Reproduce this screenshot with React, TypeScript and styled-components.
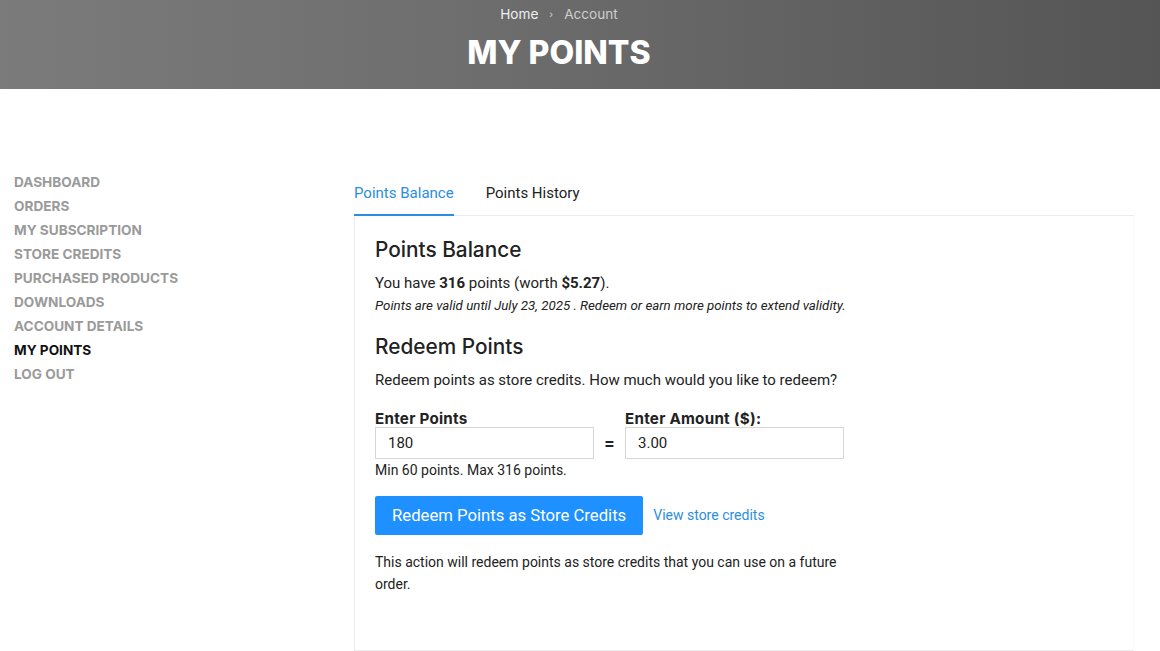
import React from "react";
import styled, { createGlobalStyle } from "styled-components";

const GlobalStyle = createGlobalStyle`
  html, body { margin: 0; padding: 0; background: #fff; }
  body { font-family: Roboto, "Liberation Sans", Arial, sans-serif; color: #222; }
  * { box-sizing: border-box; }
`;

const HEAD = `Inter, "Noto Sans", "Liberation Sans", sans-serif`;

const Page = styled.div`
  width: 1160px;
  min-height: 651px;
  display: flex;
  flex-direction: column;
`;

const Hero = styled.header`
  height: 89px;
  background: linear-gradient(90deg, #7b7b7b 0%, #6e6e6e 40%, #5f5f5f 75%, #555555 100%);
  display: flex;
  flex-direction: column;
  align-items: center;
  padding: 6px 42px 0 0;
`;

const Crumbs = styled.nav`
  display: flex;
  align-items: center;
  gap: 11px;
  font-family: ${HEAD};
  font-size: 13.6px;
  line-height: 16px;
  color: #e6e6e6;
`;

const CrumbSep = styled.span`
  font-size: 10px;
  color: #d0d0d0;
`;

const CrumbItem = styled.span<{ $muted?: boolean }>`
  color: ${(p) => (p.$muted ? "#cfcfcf" : "#f0f0f0")};
`;

const Title = styled.h1`
  margin: 12px 0 0;
  font-family: ${HEAD};
  font-weight: 800;
  font-size: 32px;
  line-height: 38px;
  color: #fff;
`;

const Body = styled.div`
  display: flex;
  padding: 79px 26px 0 14px;
`;

const Sidebar = styled.nav`
  width: 340px;
  display: flex;
  flex-direction: column;
  padding-top: 2px;
`;

const SideLink = styled.a<{ $active?: boolean }>`
  font-family: ${HEAD};
  font-weight: 700;
  font-size: 13.6px;
  line-height: 24px;
  text-transform: uppercase;
  color: ${(p) => (p.$active ? "#111" : "#9a9a9a")};
  text-decoration: none;
`;

const Main = styled.main`
  flex: 1;
  display: flex;
  flex-direction: column;
  padding-top: 15px;
`;

const Tabs = styled.div`
  display: flex;
  gap: 32px;
  border-bottom: 1px solid #ebebeb;
  height: 33px;
`;

const Tab = styled.div<{ $active?: boolean }>`
  font-size: 15px;
  line-height: 18px;
  padding-top: 1px;
  color: ${(p) => (p.$active ? "#2a8de4" : "#222")};
  border-bottom: 2px solid ${(p) => (p.$active ? "#2a8de4" : "transparent")};
  margin-bottom: -1px;
`;

const Panel = styled.section`
  border: 1px solid #ececec;
  border-top: none;
  border-right-color: #fafafa;
  padding: 21px 20px 0;
  height: 435px;
`;

const H2 = styled.h2<{ $top?: number }>`
  margin: ${(p) => p.$top ?? 0}px 0 0;
  font-family: ${HEAD};
  font-weight: 500;
  font-size: 20.8px;
  line-height: 26px;
  color: #222;
`;

const Text = styled.p<{ $top?: number }>`
  margin: ${(p) => p.$top ?? 0}px 0 0;
  font-size: 15px;
  line-height: 20px;
  color: #222;
`;

const Note = styled.p`
  margin: 5px 0 0;
  font-size: 13.3px;
  line-height: 16px;
  font-style: italic;
  color: #222;
`;

const FormRow = styled.div`
  display: flex;
  align-items: flex-start;
  margin-top: 20px;
`;

const Field = styled.div`
  display: flex;
  flex-direction: column;
  width: 219px;
`;

const Label = styled.label`
  font-family: ${HEAD};
  font-weight: 700;
  font-size: 15.2px;
  letter-spacing: 0.25px;
  line-height: 17px;
  color: #222;
`;

const Input = styled.input`
  height: 32px;
  width: 219px;
  border: 1px solid #d6d6d6;
  padding: 0 12px;
  font-family: Roboto, sans-serif;
  font-size: 15px;
  color: #222;
  outline: none;
`;

const Hint = styled.span`
  margin-top: 1px;
  font-size: 14px;
  line-height: 20px;
  color: #222;
`;

const Equals = styled.span`
  width: 31px;
  text-align: center;
  padding-top: 23px;
  font-family: ${HEAD};
  font-weight: 700;
  font-size: 16px;
  color: #222;
`;

const Actions = styled.div`
  display: flex;
  align-items: center;
  gap: 10px;
  margin-top: 16px;
`;

const Button = styled.button`
  height: 39px;
  padding: 0 17px;
  background: #1e90ff;
  color: #fff;
  border: none;
  border-radius: 2px;
  font-family: Roboto, sans-serif;
  font-size: 16.7px;
`;

const Link = styled.a`
  font-size: 14px;
  color: #2b8ee0;
  text-decoration: none;
  margin-top: -2px;
`;

const Para = styled.p`
  margin: 16px 0 0;
  max-width: 470px;
  font-size: 14px;
  line-height: 22px;
  color: #222;
`;

const links = [
  "Dashboard",
  "Orders",
  "My Subscription",
  "Store Credits",
  "Purchased Products",
  "Downloads",
  "Account Details",
  "My Points",
  "Log out",
];

export default function App() {
  return (
    <Page>
      <GlobalStyle />
      <Hero>
        <Crumbs>
          <CrumbItem>Home</CrumbItem>
          <CrumbSep>›</CrumbSep>
          <CrumbItem $muted>Account</CrumbItem>
        </Crumbs>
        <Title>MY POINTS</Title>
      </Hero>
      <Body>
        <Sidebar>
          {links.map((l) => (
            <SideLink key={l} $active={l === "My Points"}>
              {l}
            </SideLink>
          ))}
        </Sidebar>
        <Main>
          <Tabs>
            <Tab $active>Points Balance</Tab>
            <Tab>Points History</Tab>
          </Tabs>
          <Panel>
            <H2>Points Balance</H2>
            <Text $top={10}>
              You have <b>316</b> points (worth <b>$5.27</b>).
            </Text>
            <Note>
              Points are valid until July 23, 2025 . Redeem or earn more points to extend validity.
            </Note>
            <H2 $top={20}>Redeem Points</H2>
            <Text $top={10}>Redeem points as store credits. How much would you like to redeem?</Text>
            <FormRow>
              <Field>
                <Label>Enter Points</Label>
                <Input defaultValue="180" />
                <Hint>Min 60 points. Max 316 points.</Hint>
              </Field>
              <Equals>=</Equals>
              <Field>
                <Label>Enter Amount ($):</Label>
                <Input defaultValue="3.00" />
              </Field>
            </FormRow>
            <Actions>
              <Button>Redeem Points as Store Credits</Button>
              <Link>View store credits</Link>
            </Actions>
            <Para>
              This action will redeem points as store credits that you can use on a future order.
            </Para>
          </Panel>
        </Main>
      </Body>
    </Page>
  );
}
